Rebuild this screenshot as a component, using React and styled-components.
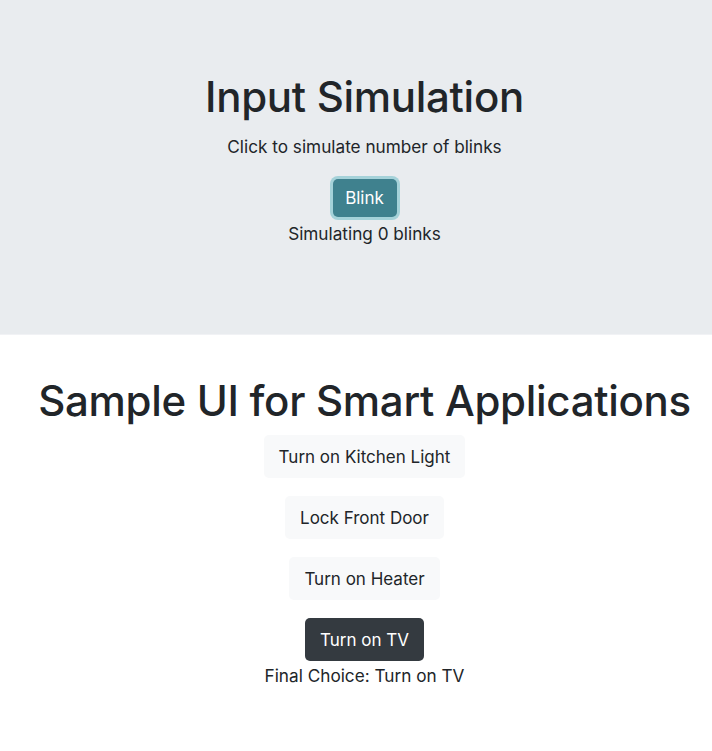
import React, { useState } from 'react';
import styled, { createGlobalStyle } from 'styled-components';

const Global = createGlobalStyle`
  body {
    margin: 0;
    background: #ffffff;
    font-family: Inter, "Noto Sans", "Liberation Sans", sans-serif;
    color: #212529;
  }
`;

const Jumbotron = styled.div`
  background: #e9ecef;
  height: 335px;
  display: flex;
  flex-direction: column;
  align-items: center;
  padding: 72px 0 0 17px;
  box-sizing: border-box;
  border-bottom: 1px solid #f1f2f5;
`;

const Title = styled.h1`
  margin: 0;
  font-weight: 500;
  font-size: ${(p) => p.size}px;
  line-height: 1.2;
  letter-spacing: -0.3px;
`;

const Text = styled.p`
  margin: ${(p) => p.top || 0}px 0 0;
  font-size: 17.2px;
  line-height: 24px;
`;

const BlinkBtn = styled.button`
  margin-top: 20px;
  width: 64px;
  height: 38px;
  border: none;
  border-radius: 5px;
  background: #3f818e;
  color: #fff;
  font-family: inherit;
  font-size: 17px;
  box-shadow: 0 0 0 3px #a5d2d9;
  cursor: pointer;
`;

const Section = styled.div`
  display: flex;
  flex-direction: column;
  align-items: center;
  padding: 41px 0 0 17px;
`;

const Choice = styled.button`
  margin-top: ${(p) => p.top}px;
  height: 43px;
  padding: 0 15px;
  border: none;
  border-radius: 5px;
  background: ${(p) => (p.active ? '#343a40' : '#f8f9fa')};
  color: ${(p) => (p.active ? '#ffffff' : '#212529')};
  font-family: inherit;
  font-size: 17px;
  cursor: pointer;
`;

const options = ['Turn on Kitchen Light', 'Lock Front Door', 'Turn on Heater', 'Turn on TV'];

export default function App() {
  let [blinks, setBlinks] = useState(0);
  let [choice, setChoice] = useState('Turn on TV');

  return (
    <>
      <Global />
      <Jumbotron>
        <Title size={42}>Input Simulation</Title>
        <Text top={13}>Click to simulate number of blinks</Text>
        <BlinkBtn onClick={() => setBlinks(blinks + 1)}>Blink</BlinkBtn>
        <Text top={5}>Simulating {blinks} blinks</Text>
      </Jumbotron>
      <Section>
        <Title size={42}>Sample UI for Smart Applications</Title>
        {options.map((o, i) => (
          <Choice key={o} top={i === 0 ? 9 : 18} active={choice === o} onClick={() => setChoice(o)}>
            {o}
          </Choice>
        ))}
        <Text top={3}>Final Choice: {choice}</Text>
      </Section>
    </>
  );
}
